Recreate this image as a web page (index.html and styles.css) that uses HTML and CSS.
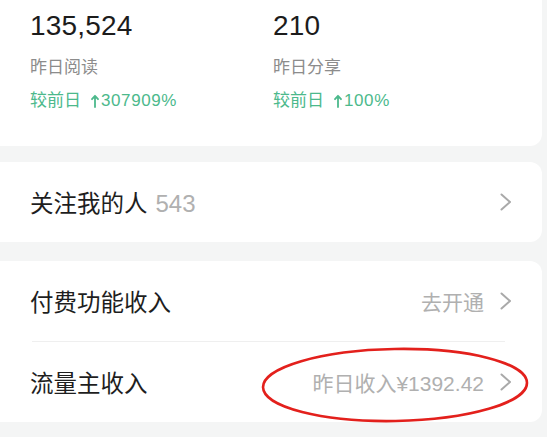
FILE: index.html
```html
<!DOCTYPE html>
<html lang="zh">
<head>
<meta charset="utf-8">
<link rel="stylesheet" href="styles.css">
</head>
<body>
<div class="page">
  <section class="card stats">
    <div class="stat">
      <div class="num">135,524</div>
      <div class="label">昨日阅读</div>
      <div class="delta">较前日<svg class="up" viewBox="0 0 8 14" width="8" height="14"><path d="M4 13 V2 M1 5.2 L4 1.8 L7 5.2" fill="none" stroke="#4cb98c" stroke-width="1.8" stroke-linecap="round" stroke-linejoin="round"/></svg><span class="pct">307909%</span></div>
    </div>
    <div class="stat">
      <div class="num">210</div>
      <div class="label">昨日分享</div>
      <div class="delta">较前日<svg class="up" viewBox="0 0 8 14" width="8" height="14"><path d="M4 13 V2 M1 5.2 L4 1.8 L7 5.2" fill="none" stroke="#4cb98c" stroke-width="1.8" stroke-linecap="round" stroke-linejoin="round"/></svg><span class="pct">100%</span></div>
    </div>
  </section>

  <section class="card follow">
    <div class="row">
      <div class="title">关注我的人<span class="count">543</span></div>
      <div class="right">
        <svg class="chev" viewBox="0 0 12 18" width="12" height="18"><path d="M1.5 1.5 L10 9 L1.5 16.5" fill="none" stroke="#a9a9a9" stroke-width="2" stroke-linecap="round" stroke-linejoin="round"/></svg>
      </div>
    </div>
  </section>

  <section class="card">
    <div class="row">
      <div class="title">付费功能收入</div>
      <div class="right">
        <span class="meta">去开通</span>
        <svg class="chev" viewBox="0 0 12 18" width="12" height="18"><path d="M1.5 1.5 L10 9 L1.5 16.5" fill="none" stroke="#a9a9a9" stroke-width="2" stroke-linecap="round" stroke-linejoin="round"/></svg>
      </div>
    </div>
    <div class="divider"></div>
    <div class="row">
      <div class="title">流量主收入</div>
      <div class="right">
        <span class="meta">昨日收入¥1392.42</span>
        <svg class="chev" viewBox="0 0 12 18" width="12" height="18"><path d="M1.5 1.5 L10 9 L1.5 16.5" fill="none" stroke="#a9a9a9" stroke-width="2" stroke-linecap="round" stroke-linejoin="round"/></svg>
      </div>
      <svg class="circle" viewBox="0 0 270 80" width="270" height="80"><ellipse cx="135" cy="40" rx="132" ry="36" fill="none" stroke="#e3201c" stroke-width="2.6" transform="rotate(-1 135 40)"/></svg>
    </div>
  </section>
</div>
</body>
</html>
```

FILE: styles.css
```css
html, body {
  margin: 0;
  padding: 0;
  background: #f4f5f5;
}
body {
  width: 547px;
  height: 437px;
  overflow: hidden;
  font-family: "Liberation Sans", "Noto Sans CJK SC", sans-serif;
}
.page {
  display: flex;
  flex-direction: column;
  gap: 16px;
  margin-left: -12px;
  width: 554px;
}
.card {
  background: #fff;
  border-radius: 12px;
}
.follow {
  margin-bottom: 3px;
}
.stats {
  margin-top: -20px;
  height: 166px;
  display: flex;
  padding-left: 42px;
  box-sizing: border-box;
  padding-top: 30px;
}
.stat {
  width: 243px;
  display: flex;
  flex-direction: column;
}
.num {
  font-size: 28px;
  line-height: 32px;
  color: #1c1c1c;
  letter-spacing: 0.2px;
}
.label {
  margin-top: 15px;
  font-size: 17px;
  line-height: 22px;
  color: #8c8c8c;
}
.delta {
  margin-top: 11px;
  font-size: 17px;
  line-height: 22px;
  color: #4cb98c;
  display: flex;
  align-items: center;
}
.up {
  display: block;
  margin: 0 2px 0 10px;
}
.pct {
  letter-spacing: 0.6px;
}
.row {
  height: 80px;
  display: flex;
  align-items: center;
  justify-content: space-between;
  padding: 0 30px 0 42px;
  position: relative;
}
.title {
  font-size: 23.5px;
  color: #1e1e1e;
}
.count {
  color: #b0b0b0;
  font-size: 24px;
  margin-left: 8px;
}
.right {
  display: flex;
  align-items: center;
  gap: 16px;
}
.meta {
  font-size: 21px;
  color: #b0b0b0;
}
.chev {
  display: block;
}
.divider {
  height: 1px;
  background: #efefef;
  margin: 0 37px 0 44px;
}
.circle {
  position: absolute;
  left: 272px;
  top: 3px;
}
```
